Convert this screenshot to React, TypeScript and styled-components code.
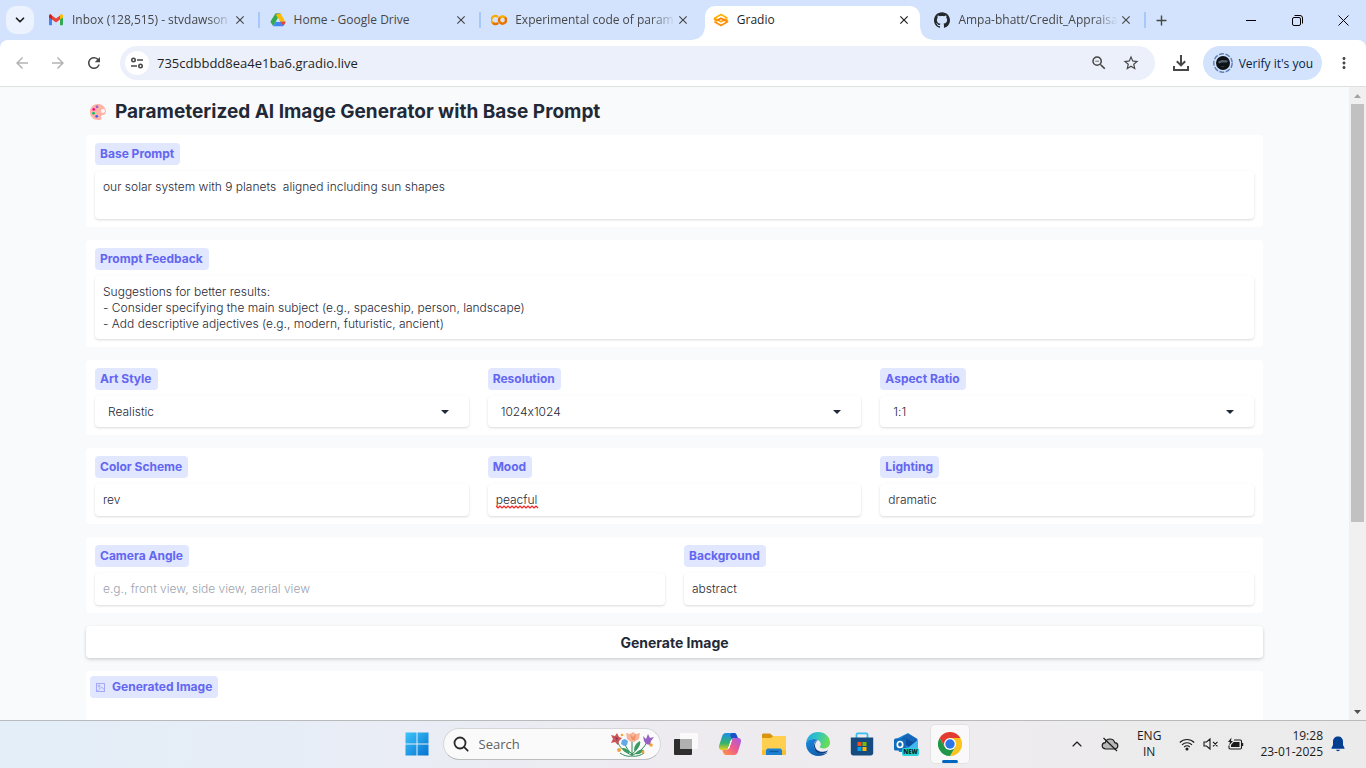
import React, { useState } from "react";
import styled, { createGlobalStyle, css } from "styled-components";
import {
  MdArrowBack,
  MdArrowForward,
  MdRefresh,
  MdStarBorder,
  MdMoreVert,
  MdOutlineZoomOut,
  MdClose,
  MdAdd,
} from "react-icons/md";
import { SiGithub } from "react-icons/si";
import { ChevronDown, ChevronUp } from "lucide-react";

const uiFont = `"Open Sans", "Noto Sans", sans-serif`;
const appFont = `Inter, "Open Sans", sans-serif`;

const GlobalStyle = createGlobalStyle`
  *, *::before, *::after { box-sizing: border-box; }
  body { margin: 0; font-family: ${uiFont}; background: #f9fafb; }
  button, input, select, textarea { font: inherit; color: inherit; margin: 0; }
`;

const Window = styled.div`
  display: flex;
  flex-direction: column;
  height: 100vh;
  overflow: hidden;
`;

const plainButton = css`
  display: flex;
  align-items: center;
  justify-content: center;
  padding: 0;
  border: 0;
  background: none;
`;

/* ---------- Browser chrome ---------- */

const TabStrip = styled.div`
  display: flex;
  flex: none;
  height: 40px;
  padding-left: 6px;
  background: #d3e3fd;
`;

const TabSearch = styled.button`
  ${plainButton}
  width: 28px;
  height: 28px;
  margin: 6px 3px 0 0;
  border-radius: 10px;
  background: #ecf3fe;
  color: #1f1f1f;
`;

const TabList = styled.div`
  display: flex;
  flex: 0 1 1108px;
  min-width: 0;
`;

const Tab = styled.div<{ $active?: boolean; $divider?: boolean }>`
  position: relative;
  display: flex;
  flex: 1 1 0;
  align-items: center;
  min-width: 0;
  height: 34px;
  margin: 6px 3px 0;
  padding: 0 8px 6px 8px;
  color: ${(p) => (p.$active ? "#1f1f1f" : "#474747")};
  font-size: 12px;
  line-height: 16px;
  ${(p) =>
    p.$active &&
    css`
      border-radius: 10px 10px 0 0;
      background: #fff;
      &::before,
      &::after {
        content: "";
        position: absolute;
        bottom: 0;
        width: 12px;
        height: 12px;
      }
      &::before {
        right: 100%;
        background: radial-gradient(circle at 0 0, transparent 11px, #fff 12px);
      }
      &::after {
        left: 100%;
        background: radial-gradient(circle at 100% 0, transparent 11px, #fff 12px);
      }
    `}
  ${(p) =>
    p.$divider &&
    css`
      &::after {
        content: "";
        position: absolute;
        top: 6px;
        right: -4px;
        width: 2px;
        height: 16px;
        background: #a8c7fa;
      }
    `}
`;

const TabTitle = styled.span<{ $fade?: boolean }>`
  flex: 1;
  min-width: 0;
  margin-left: 8px;
  overflow: hidden;
  white-space: nowrap;
  ${(p) =>
    p.$fade &&
    css`
      mask-image: linear-gradient(90deg, #000 calc(100% - 24px), transparent);
    `}
`;

const IconButton = styled.button<{ $w?: number; $tone?: string }>`
  ${plainButton}
  flex: none;
  width: ${(p) => p.$w ?? 28}px;
  height: 28px;
  color: ${(p) => p.$tone ?? "#474747"};
`;

const NewTab = styled(IconButton)`
  margin-top: 6px;
`;

const WindowControls = styled.div`
  display: flex;
  align-items: center;
  height: 40px;
  margin-left: auto;
`;

const ToolbarBack = styled.div`
  flex: none;
  background: #d3e3fd;
`;

const Toolbar = styled.div`
  display: flex;
  align-items: center;
  gap: 8px;
  height: 47px;
  padding: 0 8px;
  border-bottom: 1px solid #dde1e0;
  border-radius: 8px 8px 0 0;
  background: #fff;
`;

const AddressBar = styled.div`
  display: flex;
  flex: 1;
  align-items: center;
  gap: 4px;
  height: 34px;
  margin: 0 4px;
  padding: 0 10px 0 5px;
  border-radius: 17px;
  background: #ecf0fa;
`;

const SiteInfo = styled.button`
  ${plainButton}
  flex: none;
  width: 24px;
  height: 24px;
  margin-right: 4px;
  border-radius: 12px;
  background: #fff;
`;

const AddressInput = styled.input`
  flex: 1;
  min-width: 0;
  padding: 0;
  border: 0;
  outline: 0;
  background: none;
  color: #1f1f1f;
  font-size: 13px;
  line-height: 20px;
`;

const ProfileButton = styled.button`
  ${plainButton}
  gap: 6px;
  height: 34px;
  padding: 0 9px 0 10px;
  border-radius: 17px;
  background: #d3e3fd;
  color: #041e49;
  font-size: 12px;
  white-space: nowrap;
`;

/* ---------- Page ---------- */

const Viewport = styled.div`
  display: flex;
  flex: 1;
  min-height: 0;
  overflow: hidden;
  background: #f9fafb;
`;

const Page = styled.main`
  display: flex;
  flex: 1;
  justify-content: center;
  min-width: 0;
  overflow: hidden;
  padding: 14px 16px 0;
  font-family: ${appFont};
  font-feature-settings: "calt" 0;
`;

const Column = styled.form`
  display: flex;
  flex: 0 1 1177px;
  flex-direction: column;
  gap: 13px;
  min-width: 0;
`;

const Title = styled.h1`
  display: flex;
  align-items: center;
  gap: 8px;
  margin: 0;
  padding-left: 3px;
  color: #1f2937;
  font-size: 19px;
  font-weight: 700;
  line-height: 21px;
`;

const Card = styled.div`
  display: flex;
  flex: none;
  gap: 19px;
  padding: 8px 9px;
  border-radius: 4px;
  background: #fff;
`;

const ImageCard = styled(Card)`
  align-items: flex-start;
  min-height: 320px;
  padding: 5px 4px;
`;

const Field = styled.div`
  display: flex;
  flex: 1 1 0;
  flex-direction: column;
  align-items: flex-start;
  gap: 6px;
  min-width: 0;
`;

const tag = css`
  padding: 3px 6px 3px 5px;
  border-radius: 4px;
  background: #e0e7ff;
  color: #6366f1;
  font-size: 12px;
  font-weight: 700;
  line-height: 16px;
`;

const Label = styled.label`
  ${tag}
`;

const ImageTag = styled.div`
  ${tag}
  display: flex;
  align-items: center;
  gap: 6px;
`;

const control = css`
  display: block;
  width: 100%;
  border: 0;
  outline: 0;
  border-radius: 4px;
  background: #fff;
  box-shadow: 0 1px 3px rgba(0, 0, 0, 0.1), 0 1px 2px rgba(0, 0, 0, 0.05);
  color: #1f2937;
  font-size: 12px;
  font-weight: 300;
  font-feature-settings: inherit;
  line-height: 16px;
  &::placeholder {
    color: #9ca3af;
    opacity: 1;
  }
`;

const TextArea = styled.textarea<{ $h: number }>`
  ${control}
  height: ${(p) => p.$h}px;
  padding: 8px 8px 7px;
  overflow: hidden;
  resize: none;
`;

const ControlBox = styled.div`
  position: relative;
  width: 100%;
`;

const TextInput = styled.input`
  ${control}
  height: 32px;
  padding: 7px 8px 9px;
`;

const Squiggle = styled.svg`
  position: absolute;
  top: 21px;
  left: 8px;
  pointer-events: none;
`;

const Select = styled.select`
  ${control}
  height: 31px;
  padding: 0 40px 0 13px;
  appearance: none;
`;

const Caret = styled.svg`
  position: absolute;
  top: 14px;
  right: 20px;
  pointer-events: none;
`;

const GenerateButton = styled.button`
  ${plainButton}
  flex: none;
  height: 32px;
  border-radius: 4px;
  background: #fff;
  box-shadow: 0 1px 3px rgba(0, 0, 0, 0.12), 0 2px 4px rgba(0, 0, 0, 0.08);
  color: #1f2937;
  font-size: 14px;
  font-weight: 700;
`;

const ScrollTrack = styled.div`
  display: flex;
  flex: none;
  flex-direction: column;
  align-items: center;
  width: 17px;
  background: #f0f0f0;
`;

const ScrollArrow = styled.button`
  ${plainButton}
  flex: none;
  width: 17px;
  height: 17px;
`;

const ScrollThumb = styled.div`
  flex: 0 0 66%;
  width: 13px;
  background: #c1c1c1;
`;

const ScrollRest = styled.div`
  flex: 1;
`;

/* ---------- Taskbar ---------- */

const Taskbar = styled.footer`
  display: grid;
  flex: none;
  grid-template-columns: 1fr auto 1fr;
  align-items: center;
  height: 48px;
  padding-bottom: 2px;
  border-top: 1px solid #b9babb;
  background: linear-gradient(90deg, #e3eef8 0, #e8edf6 25%, #eeebf0 50%, #eeecee 70%, #ebebeb 100%);
`;

const Dock = styled.div`
  display: flex;
  grid-column: 2;
  align-items: center;
`;

const DockButton = styled.button<{ $active?: boolean }>`
  ${plainButton}
  position: relative;
  width: 38px;
  height: 38px;
  margin: 0 3px;
  border-radius: 4px;
  ${(p) =>
    p.$active &&
    css`
      background: #f9f9f9;
      box-shadow: 0 0 0 1px rgba(0, 0, 0, 0.04);
      &::after {
        content: "";
        position: absolute;
        bottom: 0;
        width: 16px;
        height: 3px;
        border-radius: 2px;
        background: #0067c0;
      }
    `}
`;

const SearchBox = styled.label`
  display: flex;
  align-items: center;
  gap: 10px;
  width: 218px;
  height: 32px;
  margin: 0 3px 0 4px;
  padding: 0 6px 0 9px;
  border: 1px solid #d5d6da;
  border-bottom-color: #bcbdc1;
  border-radius: 16px;
  background: #fafafb;
`;

const SearchInput = styled.input`
  flex: 1;
  min-width: 0;
  padding: 0;
  border: 0;
  outline: 0;
  background: none;
  color: #5d5d5d;
  font-size: 13px;
  line-height: 20px;
  &::placeholder {
    color: #606060;
    opacity: 1;
  }
`;

const Tray = styled.div`
  display: flex;
  align-items: center;
  justify-content: flex-end;
  gap: 8px;
  padding-right: 21px;
  color: #1b1b1b;
`;

const TrayGroup = styled.div<{ $gap: number; $space?: number }>`
  display: flex;
  align-items: center;
  gap: ${(p) => p.$gap}px;
  margin-right: ${(p) => p.$space ?? 0}px;
`;

const TrayText = styled.div<{ $align: "center" | "right" }>`
  font-size: 12px;
  line-height: 16px;
  text-align: ${(p) => p.$align};
  white-space: pre-line;
`;

/* ---------- Icons ---------- */

const GmailIcon = () => (
  <svg width="16" height="16" viewBox="0 0 16 16">
    <path d="M1 4v8.3c0 .6.4 1 1 1h2V7z" fill="#4285f4" />
    <path d="M15 4v8.3c0 .6-.4 1-1 1h-2V7z" fill="#34a853" />
    <path d="M12 3.5V7.6l3-2.2V4c0-1.5-1.6-2.2-2.7-1.4z" fill="#fbbc04" />
    <path d="M4 7.6V3.4l4 3 4-3v4.2l-4 3z" fill="#ea4335" />
    <path d="M1 4v1.4l3 2.2V3.4l-.7-.7C2.200 1.900 1 2.600 1 4z" fill="#c5221f" />
  </svg>
);

const DriveIcon = () => (
  <svg width="16" height="16" viewBox="0 0 16 16">
    <path d="M5.400 1.500h5.200L8 6z" fill="#188038" />
    <path d="M5.400 1.500 8 6 3.300 14.200.8 10.500c-.3-.5-.3-1 0-1.500z" fill="#34a853" />
    <path d="M10.600 1.500 15.300 9.700h-5.200L5.900 2.400z" fill="#fbbc04" />
    <path d="M5.900 9.700h9.500c.1.400 0 .8-.2 1.200l-1.600 2.700c-.3.500-.7.700-1.200.7H3.300z" fill="#4285f4" />
    <path d="M10.100 9.700h5.300c.1.400 0 .8-.2 1.200l-1.700 2.900z" fill="#ea4335" />
    <path d="M8 6l2.100 3.700H5.900z" fill="#d3e3fd" />
  </svg>
);

const ColabIcon = () => (
  <svg width="16" height="16" viewBox="0 0 16 16" fill="none" strokeWidth="2.300">
    <path d="M7 5A4 4 0 1 0 7 11" stroke="#f9ab00" />
    <circle cx="11.500" cy="8" r="3.500" stroke="#f9ab00" />
    <path d="M2 11A4 4 0 0 0 7.200 10.800M9 5.500A3.500 3.500 0 0 0 9 10.500M14 5.500A3.500 3.500 0 0 1 9.200 10.700" stroke="#e8710a" />
  </svg>
);

const GradioIcon = () => (
  <svg width="16" height="16" viewBox="0 0 16 16" fill="none" strokeLinejoin="round" strokeWidth="1.600">
    <path d="M1.500 6.200 8 2.500l6.500 3.700" stroke="#ffb300" />
    <path d="M14.500 9.800 8 13.500 1.500 9.800" stroke="#ff8f00" />
    <path d="M1.500 6.200 8 9.800l3.500-2" stroke="#ffa60a" />
    <path d="M14.500 9.800 8 6.200 4.500 8.200" stroke="#f97a00" />
    <path d="M1.500 6.200v1.300l3 1.700M14.500 9.800V8.500l-3-1.700" stroke="#ffa000" />
  </svg>
);

const TuneIcon = () => (
  <svg width="16" height="16" viewBox="0 0 16 16" fill="none" stroke="#474747" strokeWidth="1.600">
    <circle cx="4.500" cy="5" r="1.700" />
    <path d="M8 5h6M2 11h6" />
    <circle cx="11.500" cy="11" r="1.700" />
  </svg>
);

const DownloadIcon = () => (
  <svg width="18" height="18" viewBox="0 0 18 18" fill="none" stroke="#474747" strokeWidth="2">
    <path d="M9 1v10M4.800 7.200 9 11.400l4.200-4.200M2 12v4h14v-4" />
  </svg>
);

const AvatarIcon = () => (
  <svg width="20" height="20" viewBox="0 0 20 20">
    <circle cx="10" cy="10" r="9.200" fill="none" stroke="#5f7fb4" strokeWidth="1.400" strokeDasharray="5 1.500" />
    <circle cx="10" cy="10" r="7" fill="#0d1216" />
    <path d="M5 8.500 9 7l6 .5-1 2H9l-3 1z" fill="#53616b" />
    <path d="M7 13h5l-2 1.500z" fill="#2c373e" />
  </svg>
);

const PaletteIcon = () => (
  <svg width="18" height="18" viewBox="0 0 18 18">
    <path d="M9 1C4.200 1 1 4.500 1 9c0 4.600 3.600 8 8 8 1.700 0 3.600-.2 3.500-1.700-.1-1-.9-1.500-.4-2.500.7-1.300 2.500-.4 3.800-1.600C17 10.300 17 8.700 16.800 7.500 16 3.500 12.700 1 9 1z" fill="#ffb2a5" />
    <circle cx="14" cy="8" r="2" fill="#f9fafb" />
    <circle cx="8" cy="3.800" r="1.400" fill="#8d65c5" />
    <circle cx="4.700" cy="6.400" r="1.400" fill="#f70a8d" />
    <circle cx="4.500" cy="10.300" r="1.400" fill="#00c26b" />
    <circle cx="7.700" cy="13.300" r="1.400" fill="#3f5fff" />
  </svg>
);

const PictureIcon = () => (
  <svg width="11" height="11" viewBox="0 0 11 11" fill="none" stroke="#a5a8f7" strokeWidth="1">
    <rect x="1.500" y="1.500" width="8" height="8" />
    <circle cx="4" cy="4" r="1" />
    <path d="M2 9.500 6.500 5l3 3" />
  </svg>
);

const StartIcon = () => (
  <svg width="24" height="24" viewBox="0 0 24 24">
    <defs>
      <linearGradient id="start" x1="0" y1="0" x2="1" y2="1" gradientUnits="objectBoundingBox">
        <stop offset="0" stopColor="#3cc6fa" />
        <stop offset="1" stopColor="#0571d0" />
      </linearGradient>
    </defs>
    <path d="M.5.500h11v11H.5zM12.500.500h11v11h-11zM.5 12.500h11v11H.5zM12.500 12.500h11v11h-11z" fill="url(#start)" />
  </svg>
);

const SearchIcon = () => (
  <svg width="16" height="16" viewBox="0 0 16 16" fill="none" stroke="#2a2a2a" strokeWidth="1.800" strokeLinecap="round">
    <circle cx="7" cy="7" r="5.500" />
    <path d="m11.200 11.200 3.500 3.500" />
  </svg>
);

const FlowersIcon = () => (
  <svg width="44" height="26" viewBox="0 0 44 26">
    <g fill="none" stroke="#2e8a55" strokeWidth="1">
      <path d="M22 25V8M22 24C16 22 9 17 7 9M22 24c6-2 13-7 15-14M22 23c-3-3-6-6-7-10M22 23c4-3 7-7 8-12M22 25c-5 1-9-1-12-3M22 25c5 1 9-1 12-3" />
    </g>
    <path d="M24 20c0-5 2-8 6-10 0 5-2 8-6 10zM20 22c-4 0-7-2-8-5 4 0 7 2 8 5zM25 23c2-3 5-5 9-4-2 3-5 5-9 4z" fill="#3d9b62" />
    <path d="m16 2 4 1 3-2 3 2 4-1-1 6-5 3h-3l-4-3z" fill="#f8b497" />
    <path d="m20 3 3 3 3-3-1 6h-3z" fill="#f39067" />
    <path d="m1 4 4 1 2-3 2 4 3 1-3 3-1 4-3-3-4 1 2-4z" fill="#c95355" />
    <path d="m5 6 3 1-1 3z" fill="#8d3864" />
    <path d="m33 5 3 3 2-5 2 4 4-1-3 4-1 4-4-1-2-3z" fill="#9661c0" />
    <path d="m12 9 3-1 3 2-1 4-3 1-3-2z" fill="#64a9e5" />
    <g fill="#f3a13c">
      <circle cx="9" cy="19" r="2" />
      <circle cx="41" cy="14" r="1.800" />
      <circle cx="33" cy="21" r="1.500" />
      <circle cx="12" cy="4" r="1.300" />
    </g>
  </svg>
);

const TaskViewIcon = () => (
  <svg width="24" height="24" viewBox="0 0 24 24">
    <rect x="6" y="1" width="18" height="16" rx="1" fill="#fafafa" />
    <rect x="0" y="7" width="18" height="16" rx="1" fill="#2e2e2e" />
    <path d="M6 7h12v10H6z" fill="#b0b0b0" />
  </svg>
);

const CopilotIcon = () => (
  <svg width="24" height="24" viewBox="0 0 24 24">
    <defs>
      <linearGradient id="cpA" x1="0" y1="0" x2="0" y2="1">
        <stop offset="0" stopColor="#1c8fe8" />
        <stop offset=".6" stopColor="#35b36a" />
        <stop offset="1" stopColor="#e9cf20" />
      </linearGradient>
      <linearGradient id="cpB" x1="1" y1="0" x2="0" y2="1">
        <stop offset="0" stopColor="#a35ae8" />
        <stop offset=".5" stopColor="#ee5a8e" />
        <stop offset="1" stopColor="#ff9a3d" />
      </linearGradient>
    </defs>
    <path d="M8 1h8c2 0 2.500 1.500 3 3l.8 2H16c-2 0-2.600 1-3.200 3l-2 6c-.6 2-1.600 3-3.600 3H4c-3 0-3.500-2.500-2.700-5L4 4.500C4.700 2.300 5.800 1 8 1z" fill="url(#cpA)" />
    <path d="M14 1h2c2 0 2.500 1.500 3 3l.8 2H16c-1 0-1.700.300-2.200 1L12 3z" fill="#1c4fc9" />
    <path d="M16 23H8c-2 0-2.500-1.500-3-3l-.7-2H8c2 0 2.600-1 3.200-3l2-6c.6-2 1.600-3 3.600-3H20c3 0 3.500 2.500 2.700 5L20 19.500c-.7 2.200-1.800 3.500-4 3.500z" fill="url(#cpB)" />
    <path d="m13.400 8.500-2.700 8h-.2l2.700-8z" fill="#fff" stroke="#fff" />
  </svg>
);

const FolderIcon = () => (
  <svg width="26" height="24" viewBox="0 0 26 24">
    <path d="M1 3c0-1 .5-1.500 1.500-1.500H9L12 4v4H1z" fill="#d9960c" />
    <path d="M1 6h9l2.500-2H24c.7 0 1 .300 1 1v17c0 .7-.3 1-1 1H2c-.7 0-1-.3-1-1z" fill="#ffd04f" />
    <path d="M1 18h24v4c0 .7-.3 1-1 1H2c-.7 0-1-.3-1-1z" fill="#f9bd35" />
    <path d="M5 23v-4c0-1.500.7-2.500 2-2.500h12c1.300 0 2 1 2 2.500v4z" fill="#1b80d0" />
    <path d="M8.500 19.500h9" stroke="#0c5a9f" strokeWidth="1.400" />
  </svg>
);

const EdgeIcon = () => (
  <svg width="24" height="24" viewBox="0 0 24 24">
    <defs>
      <linearGradient id="edgeTop" x1="0" y1="0" x2="1" y2=".3">
        <stop offset="0" stopColor="#1ea3e4" />
        <stop offset=".5" stopColor="#31c4c4" />
        <stop offset="1" stopColor="#67dc58" />
      </linearGradient>
      <linearGradient id="edgeLow" x1="0" y1="0" x2="1" y2="1">
        <stop offset="0" stopColor="#1b8ce0" />
        <stop offset="1" stopColor="#0c4c9c" />
      </linearGradient>
    </defs>
    <path d="M.1 10.800C.8 4.600 5.800 0 12 0c7 0 12 5 12 10.500 0 3.800-3 6-6.200 6-2.400 0-3.900-.8-3.900-1.700 0-.7.9-1 .9-2.600C14.800 9.400 11.700 7 8 7 4.200 7 1 8.800.1 10.800z" fill="url(#edgeTop)" />
    <path d="M.1 10.800C1 8.300 4.200 7 8 7c1.600 0 3 .4 4.100 1-3 .7-4.300 3.300-4.300 6 0 4.700 4 7.700 8.500 7.700 2.300 0 4-.6 5.700-1.800C19.800 22.700 16.200 24 12 24 5 24-.6 18.500.1 10.800z" fill="url(#edgeLow)" />
    <path d="M12.100 8C9.800 9.300 9 11.800 9 13.500c0 4.200 4 6.700 8.200 6.200 2-.2 3.700-.9 4.900-1.800-.5 1-1 1.700-1.700 2.400-1.800 1.700-7 2.500-10.200-.5-3.200-3-3.100-9.600 1.900-11.800z" fill="#083c80" />
  </svg>
);

const StoreIcon = () => (
  <svg width="24" height="24" viewBox="0 0 24 24">
    <path d="M6.500 6V2.500c0-.8.4-1.200 1.200-1.200h8.600c.8 0 1.200.4 1.200 1.200V6" fill="none" stroke="#38bdf5" strokeWidth="1.800" />
    <path d="M.8 5.500h22.400V21c0 1.500-1 2.500-2.500 2.500H3.300C1.800 23.500.8 22.500.8 21z" fill="#174a7e" />
    <path d="M7.500 10h4v4h-4z" fill="#f25022" />
    <path d="M12.500 10h4v4h-4z" fill="#7fba00" />
    <path d="M7.500 15h4v4h-4z" fill="#00a4ef" />
    <path d="M12.500 15h4v4h-4z" fill="#ffb900" />
  </svg>
);

const OutlookIcon = () => (
  <svg width="26" height="24" viewBox="0 0 26 24">
    <path d="m3 7 12-6 9.500 6v13H6z" fill="#1b86d9" />
    <path d="M5 8 15 3l9 5-8 7z" fill="#0d4f9e" />
    <path d="m9 5 6-3 9 5-4 3z" fill="#1763b5" />
    <path d="M15 16 25 8v10z" fill="#45b6ee" />
    <rect x="1" y="6.500" width="12" height="12" rx="1.500" fill="#0f6cbd" />
    <ellipse cx="7" cy="12.500" rx="2.700" ry="3" fill="none" stroke="#fff" strokeWidth="1.700" />
    <rect x="9" y="16" width="17" height="8" rx="2" fill="#2bd4d8" />
    <text x="17.500" y="22.300" textAnchor="middle" fontFamily="Open Sans" fontWeight="800" fontSize="6" fill="#06282c">NEW</text>
  </svg>
);

const ChromeIcon = () => (
  <svg width="24" height="24" viewBox="0 0 24 24">
    <path d="M12 6h10.400A12 12 0 0 1 12 24l5.200-9z" fill="#fcc31e" />
    <path d="M1.600 6A12 12 0 0 1 22.400 6H12L6.800 15z" fill="#e33b2e" />
    <path d="M1.600 6A12 12 0 0 0 12 24l5.200-9H6.800z" fill="#229648" />
    <circle cx="12" cy="12" r="6" fill="#fff" />
    <circle cx="12" cy="12" r="4.700" fill="#2a76e8" />
  </svg>
);

const CloudOffIcon = () => (
  <svg width="18" height="16" viewBox="0 0 18 16" fill="none" stroke="#1b1b1b" strokeWidth="1.200">
    <path d="M5 13C2.500 13 1.200 11.500 1.200 9.800 1.200 8 2.500 6.800 4.300 6.700 4.900 4.300 6.700 3 9 3s4.100 1.300 4.700 3.700c1.800.1 3.100 1.300 3.100 3.100 0 1.700-1.300 3.200-3.800 3.200z" fill="#b8b8b8" />
    <path d="m2.500 2 13.500 13" />
  </svg>
);

const WifiIcon = () => (
  <svg width="16" height="14" viewBox="0 0 16 14" fill="none" stroke="#1b1b1b" strokeWidth="1.100">
    <path d="M.8 5.500a10.200 10.200 0 0 1 14.400 0M3 7.800a7 7 0 0 1 10 0M5.200 10a4 4 0 0 1 5.600 0" />
    <circle cx="8" cy="12" r="1" fill="#1b1b1b" />
  </svg>
);

const MuteIcon = () => (
  <svg width="16" height="14" viewBox="0 0 16 14" fill="none" stroke="#1b1b1b" strokeWidth="1.100">
    <path d="M1 5h2.500L7 2v10L3.500 9H1zM10 4.800l4.500 4.500M14.500 4.800 10 9.300" />
  </svg>
);

const BatteryIcon = () => (
  <svg width="17" height="14" viewBox="0 0 17 14" fill="none" stroke="#1b1b1b" strokeWidth="1.100">
    <path d="M7 3h6.300c.7 0 1.200.5 1.200 1.200v6.600c0 .7-.5 1.200-1.200 1.200H3.200c-.7 0-1.200-.5-1.200-1.200V8.500" />
    <path d="M6.500 5H12.500v5H4V8z" fill="#1b1b1b" stroke="none" />
    <path d="M15 6h1.200v3H15z" fill="#1b1b1b" stroke="none" />
    <path d="M4.500.5 1 5h2L2 8.500 6 4H4z" fill="#1b1b1b" stroke="none" />
  </svg>
);

const BellIcon = () => (
  <svg width="14" height="16" viewBox="0 0 14 16" fill="#003e92">
    <path d="M7 .5C4 .5 2 2.600 2 5.500V9L.5 12v.8h13V12L12 9V5.500C12 2.600 10 .5 7 .5zM5 13.800c.3.800 1 1.400 2 1.400s1.700-.6 2-1.400z" />
  </svg>
);

/* ---------- Composition ---------- */

interface TabSpec {
  title: string;
  icon: React.ReactNode;
  active?: boolean;
  fade?: boolean;
  divider?: boolean;
}

const tabs: TabSpec[] = [
  { title: "Inbox (128,515) - stvdawson", icon: <GmailIcon />, fade: true, divider: true },
  { title: "Home - Google Drive", icon: <DriveIcon />, divider: true },
  { title: "Experimental code of param", icon: <ColabIcon />, fade: true },
  { title: "Gradio", icon: <GradioIcon />, active: true },
  { title: "Ampa-bhatt/Credit_Appraisa", icon: <SiGithub size={16} color="#24292f" />, fade: true, divider: true },
];

const dockApps: [string, React.ReactNode][] = [
  ["Task view", <TaskViewIcon />],
  ["Copilot", <CopilotIcon />],
  ["File Explorer", <FolderIcon />],
  ["Microsoft Edge", <EdgeIcon />],
  ["Microsoft Store", <StoreIcon />],
  ["Outlook", <OutlookIcon />],
];

function Dropdown({ id, label, options }: { id: string; label: string; options: string[] }) {
  return (
    <Field>
      <Label htmlFor={id}>{label}</Label>
      <ControlBox>
        <Select id={id} defaultValue={options[0]}>
          {options.map((o) => (
            <option key={o}>{o}</option>
          ))}
        </Select>
        <Caret width="8" height="4" viewBox="0 0 8 4">
          <path d="M0 0h8L4 4z" fill="#1f2937" />
        </Caret>
      </ControlBox>
    </Field>
  );
}

interface TextFieldProps {
  id: string;
  label: string;
  initial?: string;
  placeholder?: string;
  misspelt?: boolean;
}

function TextField({ id, label, initial = "", placeholder, misspelt }: TextFieldProps) {
  const [value, setValue] = useState(initial);
  return (
    <Field>
      <Label htmlFor={id}>{label}</Label>
      <ControlBox>
        <TextInput
          id={id}
          value={value}
          placeholder={placeholder}
          onChange={(e) => setValue(e.target.value)}
        />
        {misspelt && value === initial && (
          <Squiggle width="43" height="4" viewBox="0 0 43 4">
            <path
              d="M0 1l2 2 2-2 2 2 2-2 2 2 2-2 2 2 2-2 2 2 2-2 2 2 2-2 2 2 2-2 2 2 2-2 2 2 2-2 2 2 2-2 2 2"
              fill="none"
              stroke="#ff2020"
              strokeWidth="1.2"
            />
          </Squiggle>
        )}
      </ControlBox>
    </Field>
  );
}

function BrowserHeader() {
  return (
    <>
      <TabStrip>
        <TabSearch aria-label="Search tabs">
          <ChevronDown size={14} strokeWidth={3} />
        </TabSearch>
        <TabList>
          {tabs.map((t) => (
            <Tab key={t.title} $active={t.active} $divider={t.divider}>
              {t.icon}
              <TabTitle $fade={t.fade}>{t.title}</TabTitle>
              <IconButton $w={16} $tone={t.active ? "#1f1f1f" : "#474747"} aria-label="Close tab">
                <MdClose size={14} />
              </IconButton>
            </Tab>
          ))}
        </TabList>
        <NewTab $w={32} aria-label="New tab">
          <MdAdd size={17} />
        </NewTab>
        <WindowControls>
          <IconButton $w={46} aria-label="Minimize">
            <svg width="10" height="10" viewBox="0 0 10 10">
              <path d="M0 5.500h10" stroke="#000" />
            </svg>
          </IconButton>
          <IconButton $w={46} aria-label="Restore">
            <svg width="11" height="11" viewBox="0 0 11 11" fill="none" stroke="#000">
              <rect x=".5" y="2.500" width="8" height="8" rx="1.500" />
              <path d="M2.500.5H8A2.500 2.500 0 0 1 10.500 3v5.500" />
            </svg>
          </IconButton>
          <IconButton $w={46} aria-label="Close">
            <svg width="11" height="11" viewBox="0 0 11 11" stroke="#000">
              <path d="m.5.5 10 10M10.500.5l-10 10" />
            </svg>
          </IconButton>
        </WindowControls>
      </TabStrip>
      <ToolbarBack>
        <Toolbar>
          <IconButton $tone="#b4b4b4" aria-label="Back">
            <MdArrowBack size={18} />
          </IconButton>
          <IconButton $tone="#b4b4b4" aria-label="Forward">
            <MdArrowForward size={18} />
          </IconButton>
          <IconButton aria-label="Reload">
            <MdRefresh size={18} />
          </IconButton>
          <AddressBar>
            <SiteInfo aria-label="Site information">
              <TuneIcon />
            </SiteInfo>
            <AddressInput aria-label="Address" defaultValue="735cdbbdd8ea4e1ba6.gradio.live" />
            <IconButton aria-label="Zoom">
              <MdOutlineZoomOut size={18} />
            </IconButton>
            <IconButton aria-label="Bookmark">
              <MdStarBorder size={18} />
            </IconButton>
          </AddressBar>
          <IconButton aria-label="Downloads">
            <DownloadIcon />
          </IconButton>
          <ProfileButton>
            <AvatarIcon />
            Verify it's you
          </ProfileButton>
          <IconButton aria-label="Menu">
            <MdMoreVert size={18} />
          </IconButton>
        </Toolbar>
      </ToolbarBack>
    </>
  );
}

function GeneratorPage() {
  return (
    <Page>
      <Column onSubmit={(e) => e.preventDefault()}>
        <Title>
          <PaletteIcon />
          Parameterized AI Image Generator with Base Prompt
        </Title>
        <Card>
          <Field>
            <Label htmlFor="prompt">Base Prompt</Label>
            <TextArea
              id="prompt"
              $h={48}
              spellCheck={false}
              defaultValue="our solar system with 9 planets  aligned including sun shapes"
            />
          </Field>
        </Card>
        <Card>
          <Field>
            <Label htmlFor="feedback">Prompt Feedback</Label>
            <TextArea
              id="feedback"
              $h={63}
              readOnly
              defaultValue={
                "Suggestions for better results:\n- Consider specifying the main subject (e.g., spaceship, person, landscape)\n- Add descriptive adjectives (e.g., modern, futuristic, ancient)"
              }
            />
          </Field>
        </Card>
        <Card>
          <Dropdown id="style" label="Art Style" options={["Realistic"]} />
          <Dropdown id="resolution" label="Resolution" options={["1024x1024"]} />
          <Dropdown id="ratio" label="Aspect Ratio" options={["1:1"]} />
        </Card>
        <Card>
          <TextField id="color" label="Color Scheme" initial="rev" />
          <TextField id="mood" label="Mood" initial="peacful" misspelt />
          <TextField id="lighting" label="Lighting" initial="dramatic" />
        </Card>
        <Card>
          <TextField id="camera" label="Camera Angle" placeholder="e.g., front view, side view, aerial view" />
          <TextField id="background" label="Background" initial="abstract" />
        </Card>
        <GenerateButton type="submit">Generate Image</GenerateButton>
        <ImageCard>
          <ImageTag>
            <PictureIcon />
            Generated Image
          </ImageTag>
        </ImageCard>
      </Column>
    </Page>
  );
}

function DesktopTaskbar() {
  return (
    <Taskbar>
      <Dock>
        <DockButton aria-label="Start">
          <StartIcon />
        </DockButton>
        <SearchBox>
          <SearchIcon />
          <SearchInput placeholder="Search" aria-label="Search" />
          <FlowersIcon />
        </SearchBox>
        {dockApps.map(([name, icon]) => (
          <DockButton key={name} aria-label={name}>
            {icon}
          </DockButton>
        ))}
        <DockButton $active aria-label="Google Chrome">
          <ChromeIcon />
        </DockButton>
      </Dock>
      <Tray>
        <TrayGroup $gap={16} $space={10}>
          <ChevronUp size={16} strokeWidth={1.75} />
          <CloudOffIcon />
        </TrayGroup>
        <TrayGroup $gap={0} $space={10}>
          <TrayText $align="center">{"ENG\nIN"}</TrayText>
        </TrayGroup>
        <TrayGroup $gap={8} $space={8}>
          <WifiIcon />
          <MuteIcon />
          <BatteryIcon />
        </TrayGroup>
        <TrayText $align="right">{"19:28\n23-01-2025"}</TrayText>
        <BellIcon />
      </Tray>
    </Taskbar>
  );
}

export default function App() {
  return (
    <>
      <GlobalStyle />
      <Window>
        <BrowserHeader />
        <Viewport>
          <GeneratorPage />
          <ScrollTrack>
            <ScrollArrow aria-label="Scroll up">
              <svg width="7" height="4" viewBox="0 0 7 4">
                <path d="M0 4h7L3.500 0z" fill="#a3a3a3" />
              </svg>
            </ScrollArrow>
            <ScrollThumb />
            <ScrollRest />
            <ScrollArrow aria-label="Scroll down">
              <svg width="7" height="4" viewBox="0 0 7 4">
                <path d="M0 0h7L3.500 4z" fill="#505050" />
              </svg>
            </ScrollArrow>
          </ScrollTrack>
        </Viewport>
        <DesktopTaskbar />
      </Window>
    </>
  );
}
